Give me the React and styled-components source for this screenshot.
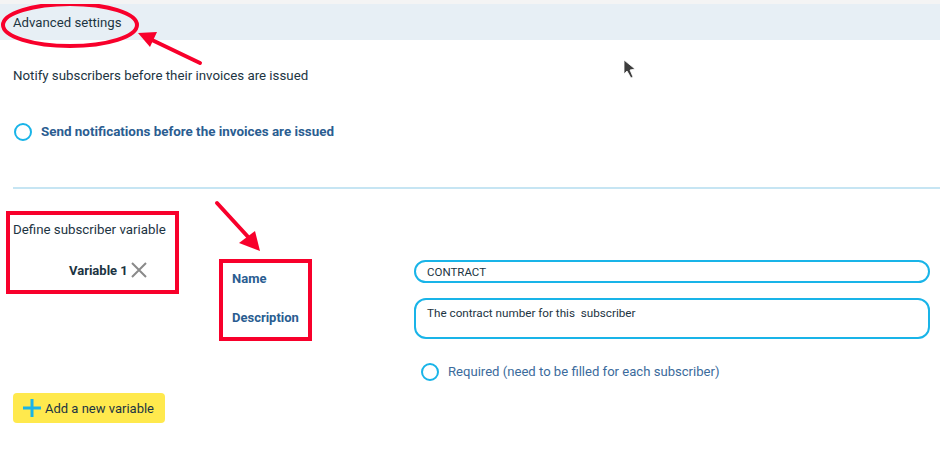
import React from 'react';
import styled, { createGlobalStyle } from 'styled-components';

const GlobalStyle = createGlobalStyle`
  html, body {
    margin: 0;
    padding: 0;
    background: #ffffff;
  }
  body {
    font-family: Roboto, "Liberation Sans", sans-serif;
    font-size: 13px;
    color: #1c3442;
  }
`;

const Page = styled.div`
  position: relative;
  width: 940px;
  height: 453px;
  overflow: hidden;
  background: #fff;
  border-top: 4px solid #f4f4f4;
  box-sizing: border-box;
`;

const Header = styled.div`
  height: 36px;
  background: #e7eff5;
  display: flex;
  align-items: center;
  padding-left: 13px;
  font-size: 13.2px;
  color: #1c3442;
`;

const Section = styled.div`
  padding: 28px 13px 0;
  display: flex;
  flex-direction: column;
`;

const Title = styled.div`
  line-height: 16px;
  font-size: 13.3px;
`;

const RadioRow = styled.label`
  display: flex;
  align-items: center;
  gap: ${({ gap }) => gap || 9}px;
  margin-top: ${({ top }) => top || 0}px;
  margin-left: ${({ indent }) => indent || 0}px;
  color: ${({ bold }) => (bold ? '#2a5d91' : '#3b6b9c')};
  font-weight: ${({ bold }) => (bold ? 700 : 400)};
  font-size: ${({ bold }) => (bold ? 13.4 : 13.1)}px;
  line-height: 18px;
`;

const Radio = styled.span`
  width: 14px;
  height: 14px;
  border: 2px solid #19b4e8;
  border-radius: 50%;
  flex: none;
`;

const Divider = styled.div`
  height: 2px;
  background: #c6e5f3;
  margin: 46px 0 0 13px;
`;

const Variables = styled.div`
  padding: 33px 10px 0 13px;
  display: flex;
  flex-direction: column;
`;

const VarGrid = styled.div`
  display: grid;
  grid-template-columns: 219px 182px 1fr;
  margin-top: 22px;
`;

const VarItem = styled.div`
  display: flex;
  align-items: center;
  gap: 2px;
  margin: 2px 0 0 56px;
  height: 16px;
  font-weight: 700;
  font-size: 13px;
`;

const Labels = styled.div`
  display: flex;
  flex-direction: column;
  gap: 23px;
  padding-top: 11px;
`;

const Label = styled.div`
  line-height: 16px;
  color: #2a5d91;
  font-weight: 700;
  font-size: 13px;
`;

const Fields = styled.div`
  display: flex;
  flex-direction: column;
`;

const Input = styled.div`
  height: 23px;
  box-sizing: border-box;
  border: 2px solid #19b4e8;
  border-radius: 12px;
  padding: 0 11px;
  display: flex;
  align-items: center;
  font-size: 11.5px;
  color: #1c3442;
`;

const TextArea = styled.div`
  height: 41px;
  box-sizing: border-box;
  border: 2px solid #19b4e8;
  border-radius: 12px;
  padding: 6px 11px;
  margin-top: 15px;
  font-size: 11.7px;
  line-height: 14px;
  white-space: pre;
  color: #1c3442;
`;

const AddButton = styled.button`
  align-self: flex-start;
  margin-top: 12px;
  height: 30px;
  width: 152px;
  border: none;
  border-radius: 4px;
  background: #ffe94d;
  display: flex;
  align-items: center;
  gap: 3px;
  padding: 0 0 0 9px;
  font-family: inherit;
  font-size: 13px;
  color: #1c3442;
`;

const Overlay = styled.svg`
  position: absolute;
  left: 0;
  top: -4px;
  pointer-events: none;
`;

const RED = '#f8002b';

const Annotations = () => (
  <Overlay width="940" height="453" viewBox="0 0 940 453">
    <ellipse cx="70" cy="25" rx="67" ry="21" fill="none" stroke={RED} strokeWidth="4" />
    <line x1="200" y1="63" x2="152" y2="40" stroke={RED} strokeWidth="4" strokeLinecap="round" />
    <polygon points="138,33 157,32 150,47" fill={RED} />
    <rect x="8" y="213" width="169" height="79" fill="none" stroke={RED} strokeWidth="4" />
    <line x1="217" y1="203" x2="250" y2="239" stroke={RED} strokeWidth="4" strokeLinecap="round" />
    <polygon points="260,251 239,243 255,231" fill={RED} />
    <rect x="221" y="261" width="89" height="78" fill="none" stroke={RED} strokeWidth="4" />
    <polygon points="624,60 624,74 627,71 631,78 633,77 630,70 635,69" fill="#3d3d3d" stroke="#fff" strokeWidth="0.8" />
  </Overlay>
);

const App = () => (
  <>
    <GlobalStyle />
    <Page>
      <Header>Advanced settings</Header>
      <Section>
        <Title>Notify subscribers before their invoices are issued</Title>
        <RadioRow bold top={39} indent={1}>
          <Radio />
          Send notifications before the invoices are issued
        </RadioRow>
      </Section>
      <Divider />
      <Variables>
        <Title>Define subscriber variable</Title>
        <VarGrid>
          <div>
            <VarItem>
              Variable 1
              <svg width="18" height="18" viewBox="0 0 18 18">
                <path d="M2 2 L16 16 M16 2 L2 16" stroke="#8a8a8a" strokeWidth="2" />
              </svg>
            </VarItem>
          </div>
          <Labels>
            <Label>Name</Label>
            <Label>Description</Label>
          </Labels>
          <Fields>
            <Input>CONTRACT</Input>
            <TextArea>The contract number for this  subscriber</TextArea>
            <RadioRow top={24} indent={7}>
              <Radio />
              Required (need to be filled for each subscriber)
            </RadioRow>
          </Fields>
        </VarGrid>
        <AddButton>
          <svg width="20" height="20" viewBox="0 0 20 20">
            <path d="M10 1 V19 M1 10 H19" stroke="#19b4e8" strokeWidth="3" />
          </svg>
          Add a new variable
        </AddButton>
      </Variables>
      <Annotations />
    </Page>
  </>
);

export default App;
